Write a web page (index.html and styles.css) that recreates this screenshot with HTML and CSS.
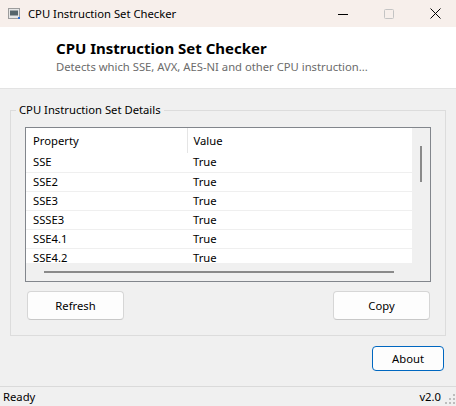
FILE: index.html
```html
<!DOCTYPE html>
<html>
<head>
<meta charset="utf-8">
<title>CPU Instruction Set Checker</title>
<link rel="stylesheet" href="styles.css">
</head>
<body>
<div class="titlebar">
  <svg class="app-icon" width="12" height="11" viewBox="0 0 12 11">
    <rect x="0.5" y="0.5" width="11" height="10" fill="#e6e6e6" stroke="#9c9c9c"/>
    <rect x="2" y="2.5" width="8" height="5" fill="#56656b"/>
    <rect x="10" y="9" width="2" height="2" fill="#2f6fd0"/>
  </svg>
  <span class="title">CPU Instruction Set Checker</span>
  <div class="controls">
    <div class="ctl"><svg width="10" height="10" viewBox="0 0 10 10"><line x1="0" y1="5.5" x2="10" y2="5.5" stroke="#000" stroke-width="1"/></svg></div>
    <div class="ctl"><svg width="10" height="10" viewBox="0 0 10 10"><rect x="0.5" y="0.5" width="9" height="9" rx="1" fill="none" stroke="#c4c4c4"/></svg></div>
    <div class="ctl"><svg width="11" height="11" viewBox="0 0 11 11"><path d="M0.5 0.5L10.5 10.5M10.5 0.5L0.5 10.5" stroke="#000" stroke-width="1"/></svg></div>
  </div>
</div>

<div class="header">
  <div class="heading">CPU Instruction Set Checker</div>
  <div class="subtitle">Detects which SSE, AVX, AES-NI and other CPU instruction...</div>
</div>

<fieldset class="group">
  <legend>CPU Instruction Set Details</legend>
  <div class="list">
    <div class="viewport">
      <table class="grid">
        <thead>
          <tr><th class="c1">Property</th><th class="c2">Value</th></tr>
        </thead>
        <tbody>
          <tr><td class="c1">SSE</td><td class="c2">True</td></tr>
          <tr><td class="c1">SSE2</td><td class="c2">True</td></tr>
          <tr><td class="c1">SSE3</td><td class="c2">True</td></tr>
          <tr><td class="c1">SSSE3</td><td class="c2">True</td></tr>
          <tr><td class="c1">SSE4.1</td><td class="c2">True</td></tr>
          <tr><td class="c1">SSE4.2</td><td class="c2">True</td></tr>
        </tbody>
      </table>
    </div>
    <div class="vscroll"><div class="vthumb"></div></div>
    <div class="hscroll"><div class="hthumb"></div></div>
    <div class="corner"></div>
  </div>
  <div class="buttons">
    <button class="btn">Refresh</button>
    <button class="btn">Copy</button>
  </div>
</fieldset>

<div class="actions">
  <button class="btn about">About</button>
</div>

<div class="statusbar">
  <span class="status">Ready</span>
  <div class="status-right">
    <span class="version">v2.0</span>
    <svg class="grip" width="12" height="12" viewBox="0 0 12 12">
      <rect x="9" y="1" width="2" height="2" fill="#bdbdbd"/>
      <rect x="5" y="5" width="2" height="2" fill="#bdbdbd"/>
      <rect x="9" y="5" width="2" height="2" fill="#bdbdbd"/>
      <rect x="1" y="9" width="2" height="2" fill="#bdbdbd"/>
      <rect x="5" y="9" width="2" height="2" fill="#bdbdbd"/>
      <rect x="9" y="9" width="2" height="2" fill="#bdbdbd"/>
    </svg>
  </div>
</div>
</body>
</html>
```

FILE: styles.css
```css
* { box-sizing: border-box; }

html, body {
  margin: 0;
  padding: 0;
}

body {
  width: 456px;
  height: 406px;
  overflow: hidden;
  background: #f0f0f0;
  font-family: "Noto Sans", "Open Sans", sans-serif;
  font-size: 11.25px;
  color: #000;
  display: flex;
  flex-direction: column;
}

.titlebar {
  height: 27px;
  flex: none;
  background: #f7efeb;
  display: flex;
  align-items: center;
}

.app-icon {
  margin-left: 8px;
  flex: none;
}

.title {
  margin-left: 8px;
  padding-bottom: 1px;
}

.controls {
  margin-left: auto;
  margin-right: -2px;
  display: flex;
  height: 27px;
}

.ctl {
  width: 46px;
  display: flex;
  align-items: center;
  justify-content: center;
}

.header {
  flex: none;
  height: 62px;
  background: #fff;
  border-bottom: 1px solid #e3e3e3;
  padding: 12px 0 0 56px;
}

.heading {
  font-size: 15px;
  line-height: 18px;
  font-weight: 700;
}

.subtitle {
  margin-top: 3px;
  line-height: 14px;
  color: #6b6b6b;
}

.group {
  flex: none;
  margin: 13px 10px 0 10px;
  border: 1px solid #dcdcdc;
  padding: 9px 14px 15px 14px;
  min-width: 0;
}

.group legend {
  margin-left: -9px;
  padding: 0 3px;
  line-height: 16px;
}

.list {
  height: 155px;
  border: 1px solid #82868c;
  display: grid;
  grid-template-columns: 1fr 18px;
  grid-template-rows: 135px 18px;
  background: #f0f0f0;
}

.viewport {
  background: #fff;
  overflow: hidden;
}

.grid {
  border-collapse: collapse;
  width: 404px;
  table-layout: fixed;
}

.grid th, .grid td {
  font-weight: 400;
  text-align: left;
  white-space: nowrap;
  padding: 0;
}

.grid th {
  height: 25px;
}

.grid th.c1 {
  width: 161px;
  border-right: 1px solid #e5e5e5;
}

.grid td {
  height: 19px;
  border-bottom: 1px solid #efefef;
  line-height: 18px;
}

.grid .c1 { padding-left: 7px; }
.grid .c2 { padding-left: 6px; }

.vscroll {
  padding: 18px 0 0 8px;
}

.vthumb {
  width: 2px;
  height: 36px;
  background: #8a8a8a;
}

.hscroll {
  padding: 8px 0 0 18px;
}

.hthumb {
  width: 350px;
  height: 2px;
  background: #8a8a8a;
}

.buttons {
  display: flex;
  justify-content: space-between;
  margin-top: 9px;
  padding: 0 1px 0 2px;
}

.btn {
  font-family: inherit;
  font-size: 11.25px;
  color: #000;
  width: 97px;
  height: 29px;
  background: #fdfdfd;
  border: 1px solid #d6d6d6;
  border-bottom-color: #c8c8c8;
  border-radius: 4px;
  padding: 0;
}

.actions {
  flex: none;
  display: flex;
  justify-content: flex-end;
  margin-top: 10px;
  padding-right: 12px;
}

.btn.about {
  width: 72px;
  height: 25px;
  border: 1px solid #0067c0;
}

.statusbar {
  margin-top: auto;
  flex: none;
  height: 20px;
  border-top: 1px solid #dadada;
  display: flex;
  justify-content: space-between;
  align-items: center;
  padding-left: 3px;
}

.status-right {
  display: flex;
  align-items: flex-end;
  height: 100%;
}

.version {
  align-self: center;
  margin-right: 3px;
}

.grip {
  margin-bottom: 1px;
}
```
